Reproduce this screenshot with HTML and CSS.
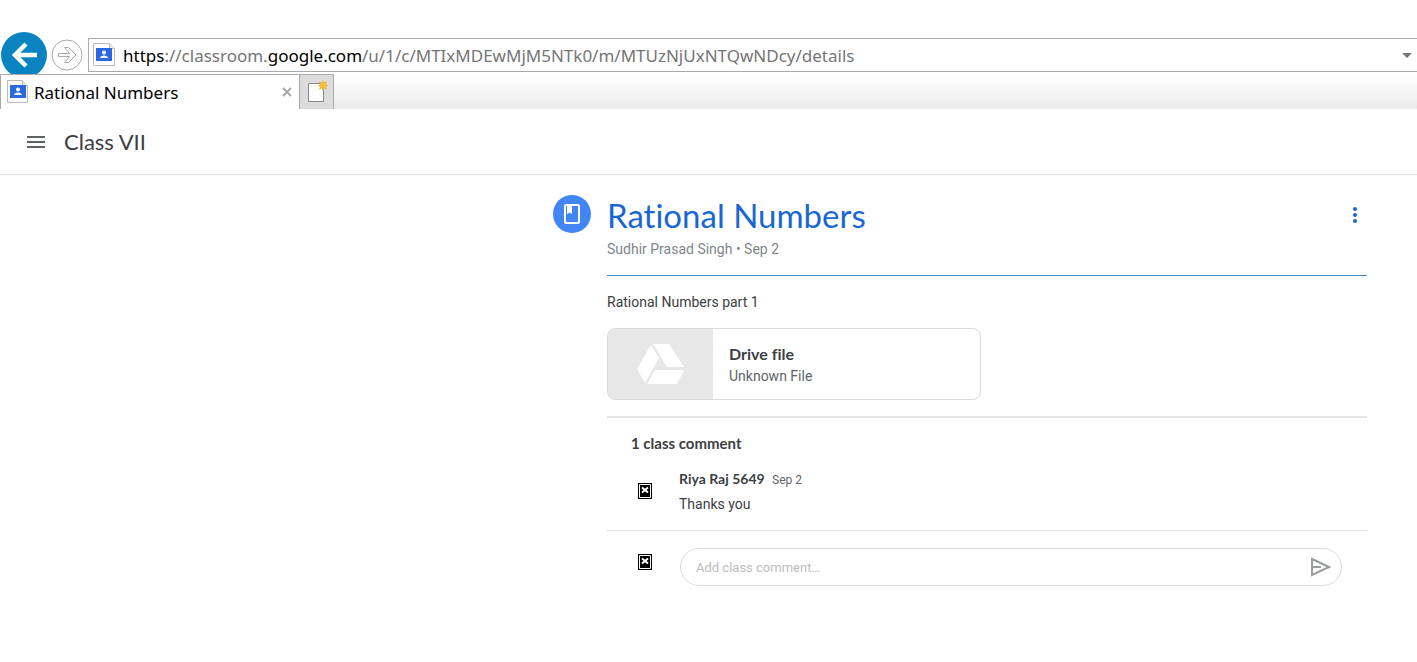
FILE: index.html
```
<!DOCTYPE html>
<html lang="en">
<head>
    <meta charset="UTF-8">
    <meta name="viewport" content="width=device-width, initial-scale=1.0">
    <title>Rational Numbers</title>
    <link rel="stylesheet" href="styles.css">
</head>
<body>

    <!-- Browser window -->
    <div class="browser">
        <div class="nav-row">
            <button class="nav-button back" aria-label="Back">
                <svg width="48" height="48" viewBox="0 0 48 48">
                    <circle cx="24" cy="24" r="23" fill="#0a84c1"/>
                    <path d="M37 24H15M26 13L15 24l11 11" fill="none" stroke="#fff" stroke-width="4.500"/>
                </svg>
            </button>
            <button class="nav-button forward" aria-label="Forward">
                <svg width="32" height="32" viewBox="0 0 32 32" fill="#fff" stroke="#aaa">
                    <circle cx="16" cy="16" r="15"/>
                    <path d="M7.500 14.500h11l-5-6h4l7.500 7.500-7.500 7.500h-4l5-6h-11z"/>
                </svg>
            </button>
            <div class="address-bar">
                <svg class="favicon" width="24" height="24" viewBox="0 0 24 24">
                    <path d="M.5.500h16l5 5v17H.5z" fill="#fff" stroke="#bbb"/>
                    <path d="M16.500.500v5h5" fill="#eee" stroke="#bbb"/>
                    <path d="M3 5h16v13H3z" fill="#2a6ade"/>
                    <circle cx="11" cy="9.500" r="2" fill="#fff"/>
                    <path d="M7 15c0-3.500 8-3.500 8 0z" fill="#fff"/>
                </svg>
                <div class="url" role="textbox" aria-label="Address" contenteditable="true" spellcheck="false"><span class="strong">https</span>://classroom.<span class="strong">google.com</span>/u/1/c/MTIxMDEwMjM5NTk0/m/MTUzNjUxNTQwNDcy/details</div>
                <button class="history" aria-label="Show history">
                    <svg width="10" height="5" viewBox="0 0 10 5"><path d="M0 0h10L5 5z" fill="#777"/></svg>
                </button>
            </div>
        </div>
        <div class="tab-row">
            <div class="tab">
                <svg class="favicon" width="24" height="24" viewBox="0 0 24 24">
                    <path d="M1.500.500h15l5 5v17h-20z" fill="#fff" stroke="#bbb"/>
                    <path d="M16.500.500v5h5" fill="#eee" stroke="#bbb"/>
                    <path d="M4 5h16v13H4z" fill="#2a6ade"/>
                    <circle cx="12" cy="9.500" r="2" fill="#fff"/>
                    <path d="M8 15c0-3.500 8-3.500 8 0z" fill="#fff"/>
                </svg>
                <span class="tab-title">Rational Numbers</span>
                <button class="tab-close" aria-label="Close tab">
                    <svg width="10" height="10" viewBox="0 0 10 10"><path d="M1 1l8 8M9 1L1 9" stroke="#aaa" stroke-width="2"/></svg>
                </button>
            </div>
            <button class="new-tab" aria-label="New tab">
                <svg width="22" height="24" viewBox="0 0 22 24">
                    <path d="M2.500 3.500h15v18h-15z" fill="#fff" stroke="#888"/>
                    <path d="M17 0l1.200 2.800L21 1.500 19.800 4.400 22 5.500l-2.200 1.200L21 9.500l-2.800-1.200L17 11l-1.200-2.700L13 9.500l1.200-2.800L12 5.500l2.200-1.100L13 1.500l2.800 1.300z" fill="#f5a623"/>
                    <circle cx="17" cy="5.500" r="3" fill="#fbbc3c"/>
                </svg>
            </button>
        </div>
    </div>

    <!-- Class header -->
    <header class="header">
        <button class="menu" aria-label="Main menu">
            <svg width="24" height="24" viewBox="0 0 24 24"><path d="M3 18h18v-2H3v2zm0-5h18v-2H3v2zm0-7v2h18V6H3z" fill="#5f6368"/></svg>
        </button>
        <a class="class-name" href="#">Class VII</a>
    </header>

    <!-- Material -->
    <main class="material">
        <div class="material-icon">
            <svg width="24" height="24" viewBox="0 0 24 24"><path d="M18 2H6c-1.100 0-2 .9-2 2v16c0 1.100.9 2 2 2h12c1.100 0 2-.9 2-2V4c0-1.100-.9-2-2-2zM6 4h1v8l2.500-1.500L12 12V4h6v16H6z" fill="#fff"/></svg>
        </div>
        <div class="content">
            <div class="title-row">
                <h1>Rational Numbers</h1>
                <button class="more" aria-label="More options">
                    <svg width="24" height="24" viewBox="0 0 24 24" fill="#1967d2"><circle cx="12" cy="6" r="2"/><circle cx="12" cy="12" r="2"/><circle cx="12" cy="18" r="2"/></svg>
                </button>
            </div>
            <p class="meta">Sudhir Prasad Singh • Sep 2</p>
            <p class="description">Rational Numbers part 1</p>

            <a class="attachment" href="#">
                <span class="thumb">
                    <svg width="48" height="40" viewBox="0 0 48 40" fill="#fff">
                        <path d="M14 1L0 25l8 14L22 14z"/>
                        <path d="M16 0h16l15 23H30z"/>
                        <path d="M18 26h29l-7 14H10z"/>
                    </svg>
                </span>
                <span class="file">
                    <span class="file-name">Drive file</span>
                    <span class="file-type">Unknown File</span>
                </span>
            </a>

            <section class="comments">
                <h2>1 class comment</h2>
                <div class="comment">
                    <svg class="avatar" width="14" height="16" viewBox="0 0 14 16">
                        <path d="M0 0h14v16H0z"/>
                        <path d="M1.500 1.500h11v13h-11z" stroke="#fff"/>
                        <path d="M4 4.500l6 5M10 4.500l-6 5" stroke="#fff" stroke-width="2"/>
                    </svg>
                    <div class="comment-body">
                        <div><span class="author">Riya Raj 5649</span> <span class="date">Sep 2</span></div>
                        <p>Thanks you</p>
                    </div>
                </div>
            </section>

            <form class="reply">
                <svg class="avatar" width="14" height="16" viewBox="0 0 14 16">
                    <path d="M0 0h14v16H0z"/>
                    <path d="M1.500 1.500h11v13h-11z" stroke="#fff"/>
                    <path d="M4 4.500l6 5M10 4.500l-6 5" stroke="#fff" stroke-width="2"/>
                </svg>
                <div class="reply-box">
                    <input type="text" aria-label="Add class comment" placeholder="Add class comment…">
                    <button class="send" type="button" aria-label="Post">
                        <svg width="22" height="20" viewBox="0 0 22 20" fill="none" stroke="#999ca0" stroke-width="2">
                            <path d="M3 2l17 8-17 8z"/>
                            <path d="M3 10h9"/>
                        </svg>
                    </button>
                </div>
            </form>
        </div>
    </main>

</body>
</html>
```
FILE: styles.css
```
/* General styles */
* {
    box-sizing: border-box;
}

body {
    font-family: Roboto, Arial, sans-serif;
    font-size: 14px;
    line-height: 20px;
    margin: 0;
    color: #3c4043;
    background-color: #fff;
    font-variant-ligatures: none;
}

h1, h2, p {
    margin: 0;
}

button {
    display: flex;
    align-items: center;
    justify-content: center;
    padding: 0;
    border: none;
    background: none;
    cursor: pointer;
}

a {
    color: inherit;
    text-decoration: none;
}

svg {
    display: block;
    flex-shrink: 0;
}

/* Browser window */
.browser {
    padding-top: 31px;
    font-family: "Noto Sans", "Segoe UI", sans-serif;
    font-size: 17px;
    color: #000;
}

.nav-row {
    display: flex;
    align-items: flex-start;
    height: 43px;
    overflow: hidden;
}

.forward {
    margin: 8px 5px 0 3px;
}

.address-bar {
    display: flex;
    align-items: center;
    flex: 1;
    height: 34px;
    margin-top: 7px;
    padding: 0 5px 0 4px;
    border: 1px solid #aaa;
    border-right: none;
}

.url {
    flex: 1;
    margin-left: 6px;
    padding-top: 2px;
    line-height: 28px;
    white-space: nowrap;
    color: #757575;
}

.strong {
    color: #000;
}

.tab-row {
    display: flex;
    height: 35px;
    background: linear-gradient(#fff, #ebebeb);
}

.tab {
    display: flex;
    align-items: center;
    width: 299px;
    padding: 0 7px 0 5px;
    border: 1px solid #aaa;
    border-width: 1px 0 0 1px;
    background-color: #fff;
}

.tab-title {
    flex: 1;
    margin-left: 4px;
    padding-top: 2px;
}

.new-tab {
    width: 35px;
    border: 1px solid #aaa;
    border-bottom: none;
    background-color: #dcdcdc;
}

/* Class header */
.header {
    display: flex;
    align-items: center;
    height: 66px;
    padding-left: 24px;
    border-bottom: 1px solid #e0e0e0;
}

.class-name {
    margin-left: 16px;
    font-family: "Google Sans", Lato, sans-serif;
    font-size: 22px;
    line-height: 28px;
}

/* Material */
.material {
    display: flex;
    gap: 16px;
    width: 814px;
    max-width: 100%;
    margin: 20px 50px 0 auto;
}

.material-icon {
    display: flex;
    align-items: center;
    justify-content: center;
    width: 38px;
    height: 38px;
    border-radius: 50%;
    background-color: #4285f4;
}

.content {
    flex: 1;
}

.title-row {
    display: flex;
    align-items: center;
    justify-content: space-between;
}

h1 {
    font-family: "Google Sans", Lato, sans-serif;
    font-size: 33px;
    font-weight: 400;
    line-height: 40px;
    color: #1967d2;
}

.meta {
    padding: 4px 0 16px;
    border-bottom: 1px solid #3f88c5;
    color: #80868b;
}

.description {
    padding: 16px 0;
}

.attachment {
    display: flex;
    width: 374px;
    height: 72px;
    border: 1px solid #dadce0;
    border-radius: 8px;
    overflow: hidden;
}

.thumb {
    display: flex;
    align-items: center;
    justify-content: center;
    width: 105px;
    background-color: #e7e7e7;
}

.file {
    display: flex;
    flex-direction: column;
    justify-content: center;
    padding-left: 16px;
    color: #5f6368;
}

.file-name {
    font-family: "Google Sans", Lato, sans-serif;
    font-size: 16px;
    font-weight: 700;
    line-height: 24px;
    color: #3c4043;
}

/* Comments */
.comments {
    margin-top: 16px;
    padding: 15px 24px;
    border-top: 2px solid #e6e6e6;
    border-bottom: 1px solid #e0e0e0;
}

h2, .author {
    font-family: "Google Sans", Lato, sans-serif;
    font-size: 14px;
    font-weight: 700;
}

h2 {
    font-size: 15px;
}

.comment {
    display: flex;
    margin-top: 16px;
}

.avatar {
    margin: 14px 27px 0 7px;
}

.date {
    margin-left: 4px;
    font-size: 12px;
    color: #5f6368;
}

.comment-body p {
    margin-top: 4px;
    padding-bottom: 1px;
}

.reply {
    display: flex;
    padding: 17px 25px 17px 24px;
}

.reply .avatar {
    margin: 6px 28px 0 7px;
}

.reply-box {
    display: flex;
    flex: 1;
    height: 38px;
    padding: 0 10px 0 15px;
    border: 1px solid #dadce0;
    border-radius: 19px;
}

.reply-box input {
    flex: 1;
    padding: 0;
    border: none;
    outline: none;
    background: none;
    font-family: inherit;
    font-size: 13px;
}

.reply-box input::placeholder {
    color: #bdbdbd;
}
```
